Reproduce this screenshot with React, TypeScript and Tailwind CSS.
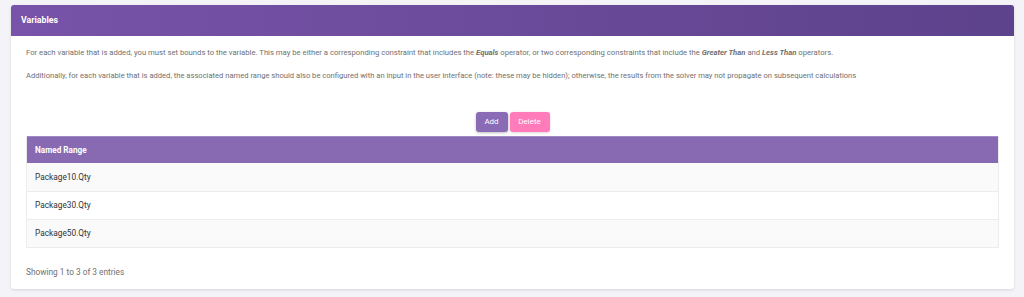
import React from "react";

const rows = ["Package10.Qty", "Package30.Qty", "Package50.Qty"];

export default function App() {
  return (
    <div
      className="w-[1024px] h-[297px] bg-[#f4f3f8] pt-[5px] px-[11px] overflow-hidden"
      style={{ fontFamily: "Roboto, 'Liberation Sans', sans-serif" }}
    >
      <div className="w-[1003px] bg-white rounded-[3px] shadow-[0_1px_3px_rgba(0,0,0,0.12)] overflow-hidden">
        <div className="h-[31px] flex items-center px-[10px] bg-gradient-to-r from-[#7853a9] to-[#5d428c]">
          <span className="text-white text-[8.8px] font-bold">Variables</span>
        </div>
        <div className="px-[15px] pt-[9px] pb-[9px]">
          <p className="text-[7.7px] leading-[15px] text-[#707070] whitespace-nowrap">
            For each variable that is added, you must set bounds to the variable. This may be either a corresponding constraint that includes the{" "}
            <b className="italic">Equals</b> operator, or two corresponding constraints that include the{" "}
            <b className="italic">Greater Than</b> and <b className="italic">Less Than</b> operators.
          </p>
          <p className="mt-[8px] text-[7.6px] leading-[15px] text-[#707070] whitespace-nowrap">
            Additionally, for each variable that is added, the associated named range should also be configured with an input in the user interface (note: these may be hidden); otherwise, the results from the solver may not propagate on subsequent calculations
          </p>
          <div className="mt-[29px] flex justify-center gap-[2px]">
            <button className="h-[20px] w-[32px] rounded-[3px] bg-[#8a6bb6] text-white text-[8px] shadow-[0_1px_3px_rgba(0,0,0,0.25)]">
              Add
            </button>
            <button className="h-[20px] w-[40px] rounded-[3px] bg-[#ff7bb9] text-white text-[8px] shadow-[0_1px_3px_rgba(0,0,0,0.15)]">
              Delete
            </button>
          </div>
          <div className="mt-[4px] border-x border-b border-[#ececec]">
            <div className="h-[27px] bg-[#886ab2] flex items-center px-[8px] border-t border-[#a08ac6]">
              <span className="text-white text-[8.2px] font-bold">Named Range</span>
            </div>
            {rows.map((r, i) => (
              <div
                key={r}
                className={`h-[28px] flex items-center px-[8px] text-[8.3px] text-[#333] ${i % 2 === 0 ? "bg-[#fafafa]" : "bg-white"} ${i > 0 ? "border-t border-[#ececec]" : ""}`}
              >
                {r}
              </div>
            ))}
          </div>
          <div className="mt-[17px] text-[8.3px] leading-[15px] text-[#707070]">
            Showing 1 to 3 of 3 entries
          </div>
        </div>
      </div>
    </div>
  );
}
